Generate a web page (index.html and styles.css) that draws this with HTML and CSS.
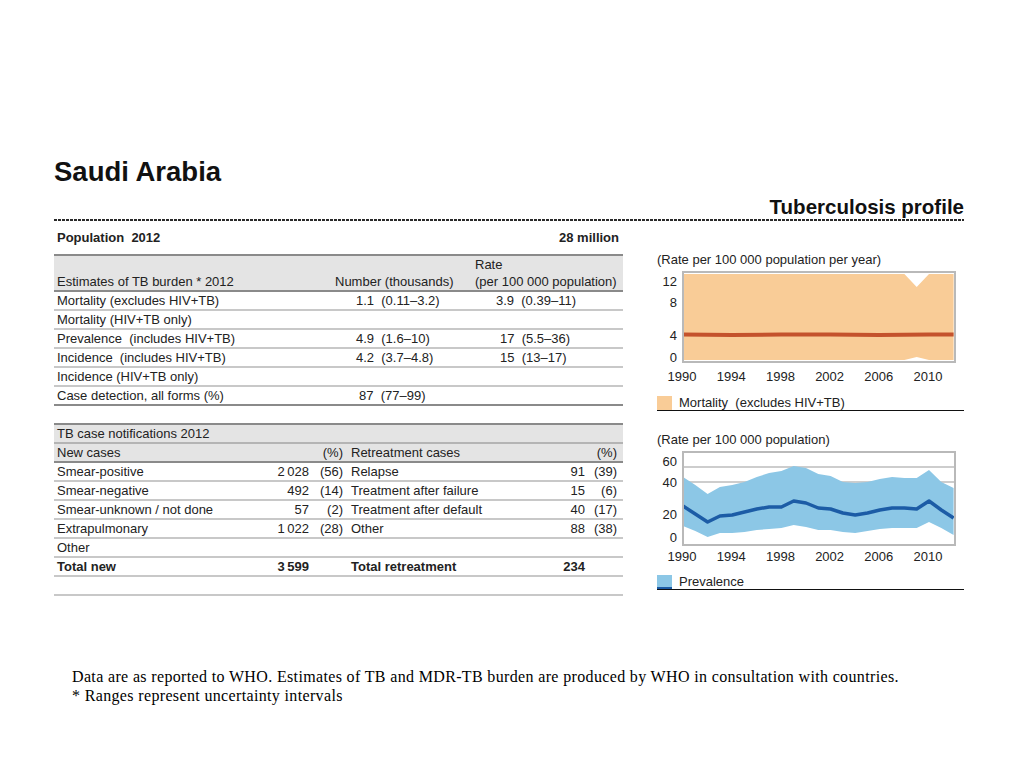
FILE: index.html
```html
<!DOCTYPE html>
<html lang="en">
<head>
<meta charset="utf-8">
<title>Saudi Arabia – Tuberculosis profile</title>
<link rel="stylesheet" href="styles.css">
</head>
<body>
<div class="page">
  <h1 class="country">Saudi Arabia</h1>
  <div class="profile">Tuberculosis profile</div>
  <div class="dots"></div>

  <div class="main">
    <div class="left">
      <div class="pop"><span>Population&nbsp; 2012</span><span>28 million</span></div>

      <div class="t1">
        <div class="t1-head">
          <div class="c1 bottom">Estimates of TB burden * 2012</div>
          <div class="c2 bottom">Number (thousands)</div>
          <div class="c3">Rate<br>(per 100 000 population)</div>
        </div>
        <div class="t1-row"><div class="c1">Mortality (excludes HIV+TB)</div><div class="c2 v">1.1&nbsp; (0.11–3.2)</div><div class="c3 v">3.9&nbsp; (0.39–11)</div></div>
        <div class="t1-row"><div class="c1">Mortality (HIV+TB only)</div><div class="c2 v"></div><div class="c3 v"></div></div>
        <div class="t1-row"><div class="c1">Prevalence&nbsp; (includes HIV+TB)</div><div class="c2 v">4.9&nbsp; (1.6–10)</div><div class="c3 v w2">17&nbsp; (5.5–36)</div></div>
        <div class="t1-row"><div class="c1">Incidence&nbsp; (includes HIV+TB)</div><div class="c2 v">4.2&nbsp; (3.7–4.8)</div><div class="c3 v w2">15&nbsp; (13–17)</div></div>
        <div class="t1-row"><div class="c1">Incidence (HIV+TB only)</div><div class="c2 v"></div><div class="c3 v"></div></div>
        <div class="t1-row last"><div class="c1">Case detection, all forms (%)</div><div class="c2 v w2">87&nbsp; (77–99)</div><div class="c3 v"></div></div>
      </div>

      <div class="t2">
        <div class="t2-title">TB case notifications 2012</div>
        <div class="t2-row sub">
          <div class="l1">New cases</div><div class="n1"></div><div class="p1">(%)</div>
          <div class="l2">Retreatment cases</div><div class="n2"></div><div class="p2">(%)</div>
        </div>
        <div class="t2-row">
          <div class="l1">Smear-positive</div><div class="n1">2&#8201;028</div><div class="p1">(56)</div>
          <div class="l2">Relapse</div><div class="n2">91</div><div class="p2">(39)</div>
        </div>
        <div class="t2-row">
          <div class="l1">Smear-negative</div><div class="n1">492</div><div class="p1">(14)</div>
          <div class="l2">Treatment after failure</div><div class="n2">15</div><div class="p2">(6)</div>
        </div>
        <div class="t2-row">
          <div class="l1">Smear-unknown / not done</div><div class="n1">57</div><div class="p1">(2)</div>
          <div class="l2">Treatment after default</div><div class="n2">40</div><div class="p2">(17)</div>
        </div>
        <div class="t2-row">
          <div class="l1">Extrapulmonary</div><div class="n1">1&#8201;022</div><div class="p1">(28)</div>
          <div class="l2">Other</div><div class="n2">88</div><div class="p2">(38)</div>
        </div>
        <div class="t2-row">
          <div class="l1">Other</div><div class="n1"></div><div class="p1"></div>
          <div class="l2"></div><div class="n2"></div><div class="p2"></div>
        </div>
        <div class="t2-row total">
          <div class="l1">Total new</div><div class="n1">3&#8201;599</div><div class="p1"></div>
          <div class="l2">Total retreatment</div><div class="n2">234</div><div class="p2"></div>
        </div>
        <div class="t2-row empty"></div>
      </div>
    </div>

    <div class="right">
      <div class="chart-title">(Rate per 100 000 population per year)</div>
      <svg class="chart" width="307" height="116" viewBox="0 0 307 116">
        <polygon fill="#f9cc97" points="26,6 247.4,6 259.7,19 272,6 296.6,6 296.6,92 272,92 259.7,89 247.4,92 26,92"/>
        <polyline fill="none" stroke="#c4522c" stroke-width="4" points="26,66.5 75,67 124,66.5 173,66.5 222,67 272,66.5 296.6,66.5"/>
        <rect x="26" y="4" width="272" height="90" fill="none" stroke="#b9b9b9" stroke-width="2"/>
        <g class="ylab" text-anchor="end">
          <text x="20" y="17.5">12</text>
          <text x="20" y="38.5">8</text>
          <text x="20" y="71.5">4</text>
          <text x="20" y="94">0</text>
        </g>
        <g class="xlab" text-anchor="middle">
          <text x="25" y="112.5">1990</text>
          <text x="74.2" y="112.5">1994</text>
          <text x="123.4" y="112.5">1998</text>
          <text x="172.6" y="112.5">2002</text>
          <text x="221.8" y="112.5">2006</text>
          <text x="271" y="112.5">2010</text>
        </g>
      </svg>
      <div class="legend"><span class="swatch orange"></span><span>Mortality&nbsp; (excludes HIV+TB)</span></div>

      <div class="chart-title second">(Rate per 100 000 population)</div>
      <svg class="chart" width="307" height="116" viewBox="0 0 307 116">
        <line x1="26" y1="19" x2="298" y2="19" stroke="#cdcdcd" stroke-width="2"/>
        <line x1="26" y1="34" x2="298" y2="34" stroke="#cdcdcd" stroke-width="2"/>
        <polygon fill="#8cc7e6" points="26,29 38.3,37 50.6,46 62.9,39 75.2,37 87.5,34 99.8,29 112.1,25 124.4,23 136.7,18 149,20 161.3,26 173.6,28 185.9,34 198.2,35 210.5,34 222.8,31 235.1,29 247.4,30 259.7,30 272,22 284.3,34 296.6,40 296.6,87 284.3,80 272,74 259.7,80 247.4,80 235.1,80 222.8,81 210.5,83 198.2,85 185.9,84 173.6,82 161.3,82 149,79 136.7,77 124.4,80 112.1,81 99.8,82 87.5,84 75.2,85 62.9,85 50.6,89 38.3,83 26,78"/>
        <polyline fill="none" stroke="#1c5ca6" stroke-width="3.5" stroke-linejoin="round" points="26,58 38.3,66 50.6,74 62.9,68 75.2,67 87.5,64 99.8,61 112.1,59 124.4,59 136.7,53 149,55 161.3,60 173.6,61 185.9,65 198.2,67 210.5,65 222.8,62 235.1,60 247.4,60 259.7,61 272,53 284.3,62 296.6,70"/>
        <rect x="26" y="4" width="272" height="93" fill="none" stroke="#b9b9b9" stroke-width="2"/>
        <g class="ylab" text-anchor="end">
          <text x="20" y="18">60</text>
          <text x="20" y="39">40</text>
          <text x="20" y="70.5">20</text>
          <text x="20" y="93.5">0</text>
        </g>
        <g class="xlab" text-anchor="middle">
          <text x="25" y="113">1990</text>
          <text x="74.2" y="113">1994</text>
          <text x="123.4" y="113">1998</text>
          <text x="172.6" y="113">2002</text>
          <text x="221.8" y="113">2006</text>
          <text x="271" y="113">2010</text>
        </g>
      </svg>
      <div class="legend"><span class="swatch blue"></span><span>Prevalence</span></div>
    </div>
  </div>

  <div class="footer">
    <p>Data are as reported to WHO. Estimates of TB and MDR-TB burden are produced by WHO in consultation with countries.</p>
    <p>* Ranges represent uncertainty intervals</p>
  </div>
</div>
</body>
</html>
```

FILE: styles.css
```css
html, body {
  margin: 0;
  padding: 0;
  background: #ffffff;
}

body {
  font-family: "Liberation Sans", Arial, sans-serif;
  color: #222222;
}

.page {
  width: 910px;
  padding: 156px 0 0 54px;
}

.country {
  margin: 0;
  font-size: 27.5px;
  line-height: 32px;
  font-weight: bold;
  color: #111111;
}

.profile {
  margin-top: 8px;
  text-align: right;
  font-size: 20.5px;
  line-height: 22px;
  font-weight: bold;
  color: #111111;
}

.dots {
  margin-top: 1px;
  height: 2px;
  background: repeating-linear-gradient(to right, #2a2a2a 0 3px, #ffffff 3px 4px);
}

.main {
  margin-top: 7px;
  display: flex;
  align-items: flex-start;
  gap: 34px;
}

.left {
  width: 569px;
  font-size: 13px;
}

.pop {
  display: flex;
  justify-content: space-between;
  height: 20px;
  line-height: 20px;
  font-weight: bold;
  padding: 0 4px 0 3px;
}

/* Table 1 */
.t1 {
  margin-top: 6px;
}

.t1-head,
.t1-row {
  display: grid;
  grid-template-columns: 276px 140px 153px;
}

.t1-head {
  background: #e4e4e4;
  border-top: 2px solid #8a8a8a;
  border-bottom: 2px solid #8a8a8a;
  height: 34px;
  line-height: 17px;
}

.t1-head .bottom {
  align-self: end;
}

.t1-head .c2,
.t1-head .c3 {
  padding-left: 5px;
}

.t1-row {
  height: 17px;
  line-height: 17px;
  border-bottom: 2px solid #c8c8c8;
}

.t1-row.last {
  border-bottom-color: #8a8a8a;
}

.c1 {
  padding-left: 3px;
  white-space: nowrap;
}

.v {
  padding-left: 26px;
  white-space: nowrap;
}

.v.w2 {
  padding-left: 30px;
}

.c2.v.w2 {
  padding-left: 29px;
}

/* Table 2 */
.t2 {
  margin-top: 17px;
  border-top: 2px solid #8a8a8a;
  border-bottom: 2px solid #c8c8c8;
}

.t2-title {
  background: #e4e4e4;
  height: 17px;
  line-height: 17px;
  padding-left: 3px;
  border-bottom: 2px solid #b4b4b4;
}

.t2-row {
  display: grid;
  grid-template-columns: 217px 40px 36px 194px 46px 36px;
  height: 17px;
  line-height: 17px;
  border-bottom: 2px solid #c8c8c8;
  white-space: nowrap;
}

.t2-row.sub {
  background: #e4e4e4;
  border-bottom-color: #8a8a8a;
}

.t2-row.total {
  font-weight: bold;
}

.t2-row.empty {
  border-bottom: none;
}

.l1 { padding-left: 3px; }
.n1 { text-align: right; padding-right: 2px; }
.p1 { text-align: right; padding-right: 4px; }
.l2 { padding-left: 4px; }
.n2 { text-align: right; padding-right: 2px; }
.p2 { text-align: right; padding-right: 6px; }

/* Right column charts */
.right {
  width: 307px;
  padding-top: 24px;
  font-size: 13px;
}

.chart-title {
  height: 16px;
  line-height: 16px;
  white-space: nowrap;
}

.chart-title.second {
  margin-top: 21px;
}

.chart {
  display: block;
}

.chart text {
  font-family: "Liberation Sans", Arial, sans-serif;
  font-size: 13px;
  fill: #222222;
}

.legend {
  margin-top: 12px;
  display: flex;
  align-items: center;
  gap: 7px;
  height: 14px;
  line-height: 14px;
  border-bottom: 1px solid #111111;
}

.right .legend:last-child {
  margin-top: 11px;
}

.swatch {
  width: 15px;
  height: 14px;
}

.swatch.orange {
  background: #f9cc97;
}

.swatch.blue {
  background: #8cc7e6;
  box-shadow: inset 0 -2px 0 #1c5ca6;
}

/* Footer */
.footer {
  margin: 71px 0 0 18px;
  font-family: "Liberation Serif", "Times New Roman", serif;
  font-size: 16px;
  letter-spacing: 0.35px;
  line-height: 19px;
  color: #000000;
}

.footer p {
  margin: 0;
  white-space: nowrap;
}
```
